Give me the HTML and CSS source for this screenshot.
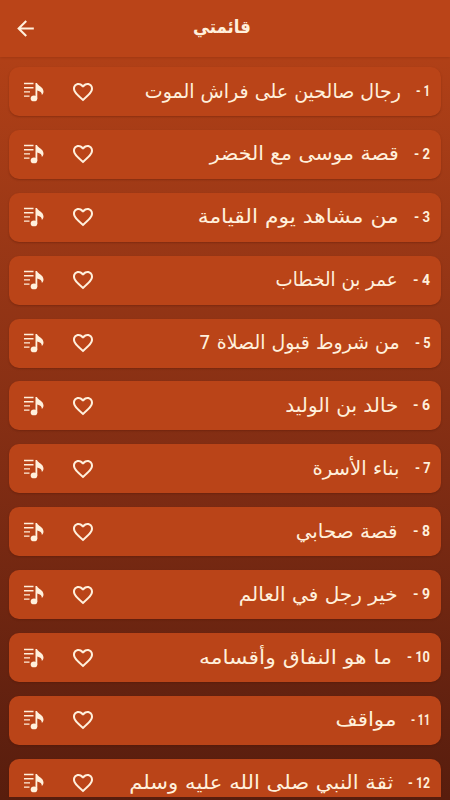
FILE: index.html
```
<!DOCTYPE html>
<html lang="ar" dir="rtl">
<head>
<meta charset="utf-8">
<title>قائمتي</title>
<link rel="stylesheet" href="styles.css">
</head>
<body>
<svg class="defs" aria-hidden="true">
  <symbol id="heart" viewBox="0 0 24 24"><path d="M16.5 3c-1.74 0-3.41.81-4.5 2.09C10.91 3.81 9.24 3 7.5 3 4.42 3 2 5.42 2 8.5c0 3.78 3.4 6.86 8.55 11.54L12 21.35l1.45-1.32C18.6 15.36 22 12.28 22 8.5 22 5.42 19.58 3 16.5 3zm-4.4 15.55-.1.1-.1-.1C7.14 14.24 4 11.39 4 8.5 4 6.5 5.5 5 7.5 5c1.54 0 3.04.99 3.57 2.36h1.87C13.46 5.99 14.96 5 16.5 5c2 0 3.5 1.5 3.5 3.5 0 2.89-3.14 5.74-7.9 10.05z"/></symbol>
  <symbol id="playlist" viewBox="0 0 22 22"><path d="M2 1.8h9.5v1.4H2zM2 6h9.5v1.4H2zM2 10.2h6v1.4H2zM2 14.4h5.5v1.4H2z"/><ellipse cx="12" cy="17.4" rx="3.3" ry="2.9"/><path d="M13.5 2h1.5c.6 2.8 6.5 4 6.5 8.4 0 1.4-.6 2.6-1.6 3.5-.1-2.2-1.6-3.8-4.6-4.4v7.9h-1.8z"/></symbol>
</svg>
<main class="screen">
  <header class="bar">
    <h1 class="heading"><span class="fit" data-width="58">قائمتي</span></h1>
    <svg class="back" viewBox="0 0 24 24"><path d="M20 11H7.83l5.59-5.59L12 4l-8 8 8 8 1.41-1.41L7.83 13H20z"/></svg>
  </header>
  <ul class="list"></ul>
</main>
<script src="app.js"></script>
</body>
</html>
```
FILE: styles.css
```
* { box-sizing: border-box; }
body { margin: 0; background: #5a1d0c; }
.defs { display: none; }
.screen {
  width: 450px;
  height: 800px;
  overflow: hidden;
  color: #fff0dc;
  font-family: "DejaVu Sans", sans-serif;
  background: linear-gradient(#b94418 0, #b04017 60px, #9b3816 230px, #7f2c13 480px, #5f200f 730px, #581d0d 800px);
}
.bar {
  height: 57px;
  display: grid;
  grid-template-columns: 50px 1fr 50px;
  align-items: center;
  background: #ba4418;
  box-shadow: 0 1px 2px rgba(100, 25, 5, .2);
}
.heading {
  grid-column: 2;
  margin: 0;
  padding: 0 0 3px 0;
  padding-left: 0;
  padding-right: 7px;
  display: flex;
  justify-content: center;
  font-size: 18px;
  line-height: 28px;
}
.back { width: 25px; height: 25px; fill: #fff0dc; justify-self: center; }
.list {
  list-style: none;
  margin: 0;
  padding: 10px 9px 0;
  height: 740px;
  overflow: hidden;
  display: flex;
  flex-direction: column;
  gap: 13.9px;
}
.card {
  flex: 0 0 49px;
  display: flex;
  align-items: center;
  padding: 0 11px 0 13px;
  border-radius: 10px;
  background: #ba4418;
  box-shadow: 0 1px 2px rgba(70, 15, 0, .3);
}
.fit { display: block; white-space: nowrap; transform-origin: right center; }
.number {
  font: 700 15px/24px Roboto, sans-serif;
  direction: ltr;
  margin-left: 15px;
  padding-bottom: 1px;
}
.name { flex: 1; font-size: 19.5px; line-height: 28px; }
.icon { width: 24px; height: 24px; fill: #fff0dc; }
.playlist { width: 22px; height: 22px; margin-right: 27px; fill: #fff0dc; }
```
FILE: app.js
```
const rows = [
  ["رجال صالحين على فراش الموت", 256, 14],
  ["قصة موسى مع الخضر", 189, 16],
  ["من مشاهد يوم القيامة", 201, 16],
  ["عمر بن الخطاب", 122, 17],
  ["من شروط قبول الصلاة 7", 201, 15.5],
  ["خالد بن الوليد", 113, 17],
  ["بناء الأسرة", 87, 15.5],
  ["قصة صحابي", 102, 17],
  ["خير رجل في العالم", 159, 17],
  ["ما هو النفاق وأقسامه", 193, 23],
  ["مواقف", 61, 19],
  ["ثقة النبي صلى الله عليه وسلم", 264, 22]
];

document.querySelector(".list").innerHTML = rows.map(([name, width, numberWidth], i) => `
  <li class="card">
    <span class="number"><span class="fit" data-width="${numberWidth}">- ${i + 1}</span></span>
    <span class="name"><span class="fit" data-width="${width}">${name}</span></span>
    <svg class="icon"><use href="#heart"/></svg>
    <svg class="playlist"><use href="#playlist"/></svg>
  </li>`).join("");

// Condense each label to the width reserved for it.
document.querySelectorAll(".fit").forEach((el) => {
  el.style.width = "max-content";
  const scale = el.dataset.width / el.getBoundingClientRect().width;
  el.style.width = `${el.dataset.width}px`;
  el.style.direction = el.closest(".number") ? "ltr" : "rtl";
  const inner = document.createElement("span");
  inner.className = "fit";
  inner.style.width = "max-content";
  inner.style.transform = `scaleX(${scale})`;
  inner.style.transformOrigin = el.closest(".number") ? "left center" : "right center";
  inner.append(...el.childNodes);
  el.append(inner);
});
```
